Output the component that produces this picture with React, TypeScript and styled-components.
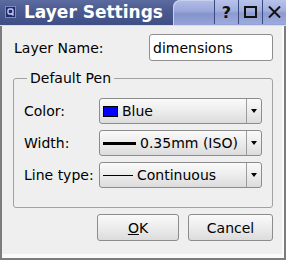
import React from 'react';
import styled, { createGlobalStyle } from 'styled-components';

const GlobalStyle = createGlobalStyle`
  html, body { margin: 0; padding: 0; background: #efefef; }
  body { font-family: "DejaVu Sans", Verdana, sans-serif; font-size: 14px; color: #000; }
  * { box-sizing: border-box; }
`;

const Window = styled.div`
  width: 286px;
  height: 260px;
  display: flex;
  flex-direction: column;
  background: #efefef;
  overflow: hidden;
`;

const TitleBar = styled.div`
  height: 26px;
  flex-shrink: 0;
  display: flex;
  align-items: stretch;
  background: linear-gradient(#5b6ba0 0%, #4a5a90 45%, #3f4f86 100%);
  border-bottom: 1px solid #d8dcea;
`;

const AppIcon = styled.svg`
  width: 11px;
  height: 12px;
  margin: 6px 8px 0 5px;
  flex-shrink: 0;
`;

const Title = styled.div`
  font-weight: bold;
  font-size: 17px;
  line-height: 25px;
  color: #fff;
  white-space: nowrap;
`;

const ButtonArea = styled.div`
  margin-left: auto;
  width: 113px;
  height: 25px;
  display: flex;
  justify-content: flex-end;
  border-radius: 7px 0 0 0;
  background: linear-gradient(#b3bde6 0%, #9aa7da 45%, #8593cc 55%, #95a3d8 100%);
  box-shadow: inset 1px 1px 0 #c8d0f0;
`;

const TitleButton = styled.div`
  width: 24px;
  height: 24px;
  display: flex;
  align-items: center;
  justify-content: center;
  border-left: 1px solid #3c4a82;
  background: linear-gradient(#b8c2ea 0%, #a2aede 45%, #8e9bd0 55%, #9eaadc 100%);
  font-weight: bold;
  font-size: 16px;
  color: #111;
`;

const Body = styled.div`
  flex: 1;
  display: flex;
  flex-direction: column;
  padding: 8px 11px 0 11px;
  border-left: 2px solid #7c7c7c;
  border-right: 2px solid #7c7c7c;
  border-bottom: 2px solid #7c7c7c;
  box-shadow: inset -2px -4px 0 #fafafa;
`;

const NameRow = styled.div`
  display: flex;
  align-items: center;
  justify-content: space-between;
  height: 27px;
  padding-left: 1px;
`;

const Label = styled.span`
  white-space: nowrap;
`;

const TextInput = styled.div`
  width: 124px;
  height: 27px;
  display: flex;
  align-items: center;
  padding-left: 3px;
  background: #fff;
  border: 1px solid #8e8e8e;
  border-radius: 3px;
`;

const Group = styled.fieldset`
  margin: 9px 0 0 0;
  padding: 12px 10px 19px 10px;
  border: 1px solid #a2a2a2;
  border-radius: 3px;
  min-width: 0;
`;

const Legend = styled.legend`
  margin-left: 3px;
  padding: 0 3px;
  line-height: 16px;
`;

const FormGrid = styled.div`
  display: grid;
  grid-template-columns: 75px 163px;
  grid-auto-rows: 26px;
  row-gap: 6px;
  align-items: center;
`;

const Combo = styled.div`
  height: 26px;
  display: flex;
  align-items: stretch;
  border: 1px solid #8c8c8c;
  border-radius: 3px;
  background: linear-gradient(#fafafa 0%, #ececec 50%, #dcdcdc 100%);
`;

const ComboValue = styled.div`
  flex: 1;
  display: flex;
  align-items: center;
  gap: 4px;
  padding-left: 3px;
  white-space: nowrap;
  overflow: hidden;
`;

const Swatch = styled.span<{ $color: string }>`
  width: 15px;
  height: 11px;
  border: 1px solid #000;
  background: ${p => p.$color};
  flex-shrink: 0;
`;

const PenLine = styled.span<{ $weight: number; $len: number }>`
  width: ${p => p.$len}px;
  height: ${p => p.$weight}px;
  background: #000;
  flex-shrink: 0;
`;

const ComboArrow = styled.div`
  width: 15px;
  display: flex;
  align-items: center;
  justify-content: center;
  border-left: 1px solid #9c9c9c;
  &::after {
    content: "";
    border-left: 3px solid transparent;
    border-right: 3px solid transparent;
    border-top: 4px solid #000;
  }
`;

const ButtonRow = styled.div`
  display: flex;
  justify-content: flex-end;
  gap: 9px;
  margin-top: 6px;
`;

const PushButton = styled.button<{ $w: number }>`
  width: ${p => p.$w}px;
  height: 27px;
  padding: 0;
  font: inherit;
  color: #000;
  border: 1px solid #8c8c8c;
  border-radius: 3px;
  background: linear-gradient(#fafafa 0%, #ececec 50%, #dcdcdc 100%);
`;

export default function App() {
  return (
    <>
      <GlobalStyle />
      <Window>
        <TitleBar>
          <AppIcon viewBox="0 0 11 12">
            <rect x="0.5" y="0.5" width="10" height="11" fill="#1f2b6a" stroke="#7a88c8" />
            <rect x="3" y="3" width="5" height="5" rx="1.5" fill="none" stroke="#c8d0f4" strokeWidth="1.4" />
            <line x1="6.5" y1="7" x2="8.5" y2="9.5" stroke="#c8d0f4" strokeWidth="1.4" />
          </AppIcon>
          <Title>Layer Settings</Title>
          <ButtonArea>
            <TitleButton>?</TitleButton>
            <TitleButton>
              <svg width="13" height="12" viewBox="0 0 13 12">
                <rect x="1" y="1" width="11" height="10" fill="none" stroke="#111" strokeWidth="2" />
              </svg>
            </TitleButton>
            <TitleButton>
              <svg width="13" height="12" viewBox="0 0 13 12">
                <path d="M1 0.5 L12 11.5 M12 0.5 L1 11.5" stroke="#111" strokeWidth="2" />
              </svg>
            </TitleButton>
          </ButtonArea>
        </TitleBar>
        <Body>
          <NameRow>
            <Label>Layer Name:</Label>
            <TextInput>dimensions</TextInput>
          </NameRow>
          <Group>
            <Legend>Default Pen</Legend>
            <FormGrid>
              <Label>Color:</Label>
              <Combo>
                <ComboValue>
                  <Swatch $color="#0000ff" />
                  Blue
                </ComboValue>
                <ComboArrow />
              </Combo>
              <Label>Width:</Label>
              <Combo>
                <ComboValue>
                  <PenLine $weight={3} $len={33} />
                  0.35mm (ISO)
                </ComboValue>
                <ComboArrow />
              </Combo>
              <Label>Line type:</Label>
              <Combo>
                <ComboValue>
                  <PenLine $weight={1} $len={30} />
                  Continuous
                </ComboValue>
                <ComboArrow />
              </Combo>
            </FormGrid>
          </Group>
          <ButtonRow>
            <PushButton $w={82}><u>O</u>K</PushButton>
            <PushButton $w={85}>Cancel</PushButton>
          </ButtonRow>
        </Body>
      </Window>
    </>
  );
}
